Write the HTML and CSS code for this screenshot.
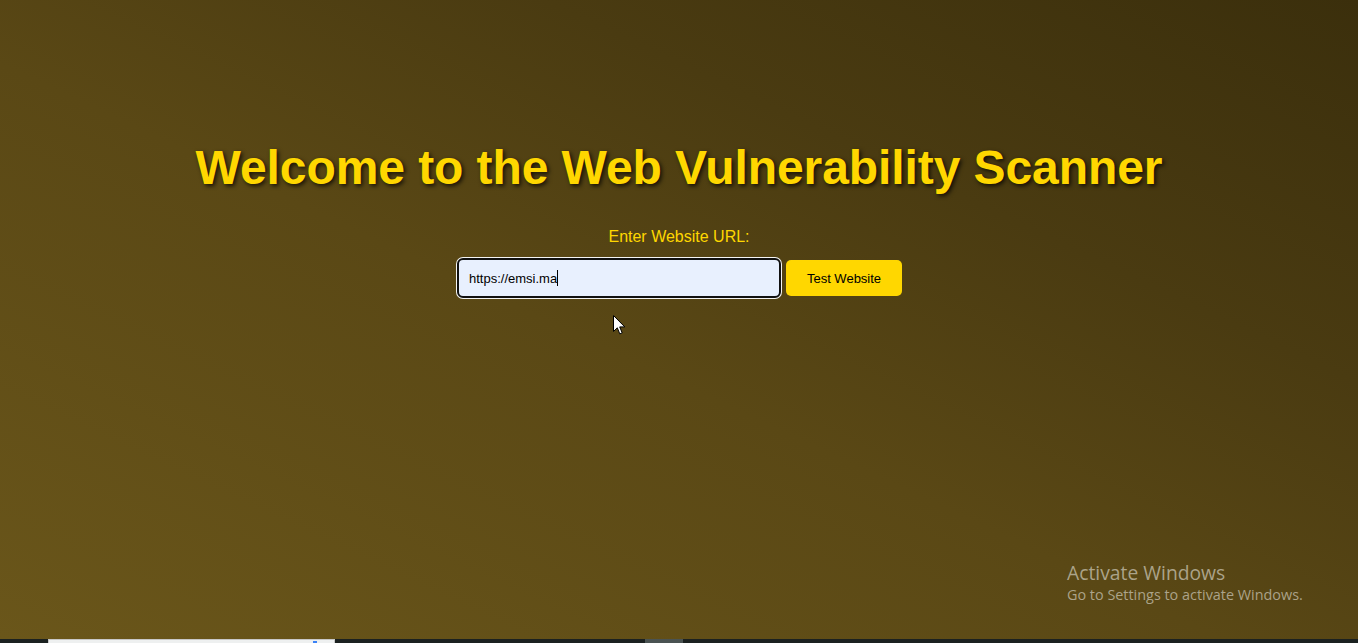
FILE: index.html
```html
<!DOCTYPE html>
<html lang="en">
<head>
<meta charset="utf-8">
<title>Web Vulnerability Scanner</title>
<link rel="stylesheet" href="styles.css">
</head>
<body>
<div class="screen">
  <main class="page">
    <h1 class="title">Welcome to the Web Vulnerability Scanner</h1>
    <form class="scan-form">
      <label class="label" for="url">Enter Website URL:</label>
      <div class="row">
        <div class="input-wrap"><span class="input-text">https://emsi.ma</span><span class="caret"></span></div>
        <button type="button" class="btn">Test Website</button>
      </div>
    </form>
    <svg class="cursor" width="13" height="21" viewBox="0 0 13 21"><path d="M0.5 0.5 L0.5 16.5 L4.3 12.8 L6.8 18.9 L9.2 17.9 L6.7 11.9 L11.8 11.9 Z" fill="#fff" stroke="#000" stroke-width="1" stroke-linejoin="miter"/></svg>
    <div class="watermark">
      <div class="wm-title">Activate Windows</div>
      <div class="wm-sub">Go to Settings to activate Windows.</div>
    </div>
  </main>
  <div class="taskbar">
    <div class="tb-search"><span class="tb-blue"></span></div>
    <div class="tb-app"></div>
  </div>
</div>
</body>
</html>
```
FILE: styles.css
```css
html, body {
  margin: 0;
  padding: 0;
}
body {
  font-family: "Liberation Sans", Arial, sans-serif;
  overflow: hidden;
}
.screen {
  width: 1358px;
  height: 643px;
  display: flex;
  flex-direction: column;
}
.page {
  position: relative;
  flex: 1;
  background: linear-gradient(to top right, #6a561a 0%, #5a4815 45%, #4a3b11 70%, #3b2f0c 100%);
  display: flex;
  flex-direction: column;
  align-items: center;
  padding-top: 140px;
  box-sizing: border-box;
}
.title {
  margin: 0;
  font-size: 48px;
  font-weight: bold;
  line-height: 55px;
  color: #ffd700;
  text-shadow: 2px 2px 4px rgba(0, 0, 0, 0.75);
  letter-spacing: -0.08px;
}
.scan-form {
  margin-top: 33px;
  display: flex;
  flex-direction: column;
  align-items: center;
}
.label {
  font-size: 16px;
  line-height: 18px;
  color: #ffd700;
}
.row {
  margin-top: 11px;
  display: flex;
  align-items: center;
  gap: 4px;
}
.input-wrap {
  width: 300px;
  height: 36px;
  padding: 0 10px;
  border: 2px solid #111;
  border-radius: 6px;
  box-shadow: 0 0 0 1px #f4f4f4;
  background: #e8f0fe;
  display: flex;
  align-items: center;
  margin: 1px;
  font-size: 13px;
  color: #000;
}
.caret {
  display: inline-block;
  width: 1px;
  height: 16px;
  background: #000;
}
.btn {
  width: 116px;
  height: 36px;
  border: none;
  border-radius: 5px;
  background: #ffd700;
  color: #000;
  font-family: "Liberation Sans", Arial, sans-serif;
  font-size: 13px;
  padding: 0;
  cursor: pointer;
}
.cursor {
  position: absolute;
  left: 613px;
  top: 315px;
}
.watermark {
  position: absolute;
  left: 1067px;
  top: 560px;
  color: rgba(205, 200, 185, 0.72);
  font-family: "Open Sans", "Noto Sans", sans-serif;
}
.wm-title {
  font-size: 19.3px;
  line-height: 25px;
}
.wm-sub {
  font-size: 14.4px;
  line-height: 20px;
}
.taskbar {
  height: 4px;
  background: #1b2120;
  display: flex;
  position: relative;
}
.tb-search {
  margin-left: 48px;
  height: 4px;
  background: #eef0f0;
  border: 1px solid #c8c8c8;
  border-bottom: none;
  box-sizing: border-box;
  width: 287px;
  position: relative;
}
.tb-blue {
  position: absolute;
  left: 264px;
  top: 1px;
  width: 4px;
  height: 3px;
  background: #3b82f6;
}
.tb-app {
  margin-left: 310px;
  width: 38px;
  height: 4px;
  background: #4a5352;
}
```
